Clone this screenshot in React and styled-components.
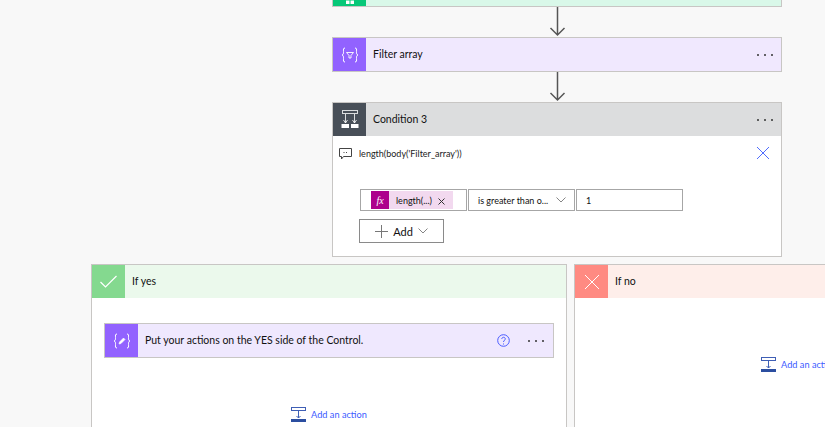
import React from "react";
import styled, { createGlobalStyle } from "styled-components";

const GlobalStyle = createGlobalStyle`
  html, body {
    margin: 0;
    padding: 0;
    background: #f8f8f8;
    font-family: Lato, "Open Sans", sans-serif;
    color: #111;
  }
`;

const Designer = styled.div`
  width: 825px;
  height: 427px;
  overflow: hidden;
  background: #f8f8f8;
`;

const Flow = styled.div`
  width: 450px;
  margin-left: 332px;
  margin-top: -28px;
  display: flex;
  flex-direction: column;
`;

const Connector = styled.svg`
  display: block;
  width: 20px;
  height: 30px;
  align-self: center;
`;

const Card = styled.div`
  box-sizing: border-box;
  width: ${(p) => p.$width || "450px"};
  flex: none;
  border: 1px solid #c8c6c4;
  background: #fff;
`;

const Header = styled.div`
  display: flex;
  align-items: center;
  height: 33px;
  background: ${(p) => p.$tint};
`;

const IconBox = styled.div`
  width: 33px;
  height: 33px;
  flex: none;
  display: flex;
  align-items: center;
  justify-content: center;
  background: ${(p) => p.$accent};
`;

const Title = styled.div`
  flex: 1;
  margin-left: 7px;
  margin-bottom: 1px;
  font-size: 10.5px;
  white-space: nowrap;
`;

const Dots = styled.div`
  display: flex;
  gap: 5px;
  margin-right: ${(p) => p.$right || "8px"};
  span {
    width: 2px;
    height: 2px;
    border-radius: 50%;
    background: #333;
  }
`;

const Help = styled.svg`
  width: 13px;
  height: 13px;
  margin-right: 18px;
  flex: none;
`;

const ConditionBody = styled.div`
  height: 120px;
  padding-top: 11px;
  box-sizing: border-box;
`;

const Expression = styled.div`
  display: flex;
  align-items: center;
  height: 12px;
  padding: 0 12px 0 6px;
  font-size: 9px;
  svg {
    flex: none;
  }
`;

const ExpressionText = styled.div`
  flex: 1;
  margin-left: 7px;
  color: #222;
`;

const Criteria = styled.div`
  display: flex;
  gap: 1px;
  margin: 30px 0 0 27px;
`;

const Field = styled.div`
  box-sizing: border-box;
  width: ${(p) => p.$width};
  height: 22px;
  display: flex;
  align-items: center;
  border: 1px solid #a6a6a6;
  font-size: 9px;
  padding-left: ${(p) => p.$pad || "0"};
`;

const Token = styled.div`
  display: flex;
  align-items: center;
  height: 18px;
  margin-left: 10px;
  width: 82px;
  background: #f2d9ef;
`;

const TokenIcon = styled.div`
  width: 18px;
  height: 18px;
  background: #ad008c;
  color: #fff;
  font-family: "Liberation Serif", serif;
  font-style: italic;
  font-size: 10px;
  display: flex;
  align-items: center;
  justify-content: center;
`;

const TokenLabel = styled.span`
  margin-left: 7px;
  flex: 1;
`;

const TokenRemove = styled.svg`
  width: 7px;
  height: 7px;
  margin-right: 8px;
  margin-top: 2px;
`;

const SelectLabel = styled.span`
  flex: 1;
  white-space: nowrap;
`;

const AddButton = styled.div`
  box-sizing: border-box;
  width: 85px;
  height: 24px;
  margin: 8px 0 0 26px;
  display: flex;
  align-items: center;
  justify-content: center;
  gap: 5px;
  border: 1px solid #8a8a8a;
  background: #fff;
  font-size: 11px;
`;

const Branches = styled.div`
  display: flex;
  gap: 7px;
  margin: 7px 0 0 91px;
  width: 1000px;
`;

const BranchBody = styled.div`
  padding: ${(p) => p.$pad};
`;

const AddAction = styled.div`
  display: flex;
  align-items: center;
  justify-content: center;
  gap: 5px;
  height: 15px;
  margin-top: ${(p) => p.$top};
  color: #3b5bff;
  font-size: 9.2px;
`;

const ActionLabel = styled.span`
  margin-bottom: 1px;
`;

const Chevron = ({ right = 0 }) => (
  <svg width="10" height="6" viewBox="0 0 10 6" style={{ marginRight: right }}>
    <path d="M.5.500l4.500 4.500 4.500-4.500" fill="none" stroke="#666" strokeWidth="0.8" />
  </svg>
);

const Arrow = () => (
  <Connector viewBox="0 0 20 30">
    <path d="M10.5 0v28M3.5 21l7 7 7-7" fill="none" stroke="#555" strokeWidth="1.5" />
  </Connector>
);

const Braces = ({ children }) => (
  <svg width="18" height="16" viewBox="0 0 18 16" fill="none" stroke="#fff" strokeWidth="1">
    <path d="M4 1C2 1 2.500 2.500 2.500 4.500S2.500 7.500 1 8c1.500.5 1.500 1.500 1.500 3.500S2 15 4 15" />
    <path d="M14 1c2 0 1.500 1.500 1.500 3.500S15.500 7.500 17 8c-1.500.5-1.500 1.500-1.500 3.500S16 15 14 15" />
    {children}
  </svg>
);

const MoreDots = ({ right }) => (
  <Dots $right={right}>
    <span />
    <span />
    <span />
  </Dots>
);

const ActionIcon = () => (
  <svg width="15" height="15" viewBox="0 0 15 15" fill="none">
    <rect x="0.500" y="0.500" width="14" height="3" stroke="#3f5fb5" />
    <path d="M7.500 4v7M5.500 9l2 2 2-2" stroke="#3f5fb5" />
    <rect x="0" y="12" width="15" height="3" fill="#2b4ea0" />
  </svg>
);

const ConditionIcon = () => (
  <svg width="18" height="19" viewBox="0 0 18 19" fill="none" stroke="#fff">
    <rect x="1.500" y="0.500" width="15" height="3" strokeOpacity="0.8" />
    <path d="M4.500 4v9M13.500 4v9M2.500 10l2 3 2-3M11.500 10l2 3 2-3" strokeOpacity="0.8" />
    <rect x="0.500" y="14" width="7.500" height="4" fill="#fff" stroke="none" />
    <rect x="10" y="14" width="7.500" height="4" fill="#fff" stroke="none" />
  </svg>
);

const ActionLink = ({ top }) => (
  <AddAction $top={top}>
    <ActionIcon />
    <ActionLabel>Add an action</ActionLabel>
  </AddAction>
);

export default function App() {
  return (
    <Designer>
      <GlobalStyle />
      <Flow>
        <Card>
          <Header $tint="#d9f8e9">
            <IconBox $accent="#07c878">
              <svg width="8" height="28" viewBox="0 0 8 28" fill="#fff">
                <rect x="0" y="24.500" width="3.500" height="3.500" />
                <rect x="4.500" y="24.500" width="3.500" height="3.500" />
              </svg>
            </IconBox>
          </Header>
        </Card>
        <Arrow />
        <Card>
          <Header $tint="#f0e8fe">
            <IconBox $accent="#9262ff">
              <Braces>
                <path d="M5.500 5.500h7L10 8.500V11H8V8.500z" strokeWidth="0.900" />
              </Braces>
            </IconBox>
            <Title>Filter array</Title>
            <MoreDots />
          </Header>
        </Card>
        <Arrow />
        <Card>
          <Header $tint="#dcddde">
            <IconBox $accent="#484f58">
              <ConditionIcon />
            </IconBox>
            <Title>Condition 3</Title>
            <MoreDots />
          </Header>
          <ConditionBody>
            <Expression>
              <svg width="13" height="13" viewBox="0 0 13 13" fill="none" stroke="#444">
                <path d="M.5 1.500h12v8H4.500L2.500 12V9.500h-2z" />
                <path d="M4.500 5.500h1M7 5.500h1" />
              </svg>
              <ExpressionText>length(body('Filter_array'))</ExpressionText>
              <svg width="12" height="12" viewBox="0 0 12 12" stroke="#3b5bff" strokeWidth="0.900">
                <path d="M0 0l12 12M12 0L0 12" />
              </svg>
            </Expression>
            <Criteria>
              <Field $width="107px">
                <Token>
                  <TokenIcon>fx</TokenIcon>
                  <TokenLabel>length(...)</TokenLabel>
                  <TokenRemove viewBox="0 0 7 7" stroke="#333" strokeWidth="1">
                    <path d="M.5.500l6 6M6.500.500l-6 6" />
                  </TokenRemove>
                </Token>
              </Field>
              <Field $width="107px" $pad="9px">
                <SelectLabel>is greater than o...</SelectLabel>
                <Chevron right={8} />
              </Field>
              <Field $width="107px" $pad="9px">
                1
              </Field>
            </Criteria>
            <AddButton>
              <svg width="13" height="13" viewBox="0 0 13 13" stroke="#777">
                <path d="M6.500 0v13M0 6.500h13" />
              </svg>
              Add
              <Chevron />
            </AddButton>
          </ConditionBody>
        </Card>
      </Flow>
      <Branches>
        <Card $width="476px">
          <Header $tint="#ebf9ec">
            <IconBox $accent="#84d98f">
              <svg width="17" height="13" viewBox="0 0 17 13" fill="none" stroke="#fff" strokeWidth="1.200">
                <path d="M.5 7l5 5L16.500 1" />
              </svg>
            </IconBox>
            <Title>If yes</Title>
          </Header>
          <BranchBody $pad="25px 12px 20px">
            <Card>
              <Header $tint="#efe8fe">
                <IconBox $accent="#9262ff">
                  <Braces>
                    <path d="M6 11l.500-2 4-4 1.500 1.500-4 4z" fill="#fff" strokeWidth="0.600" />
                  </Braces>
                </IconBox>
                <Title>Put your actions on the YES side of the Control.</Title>
                <Help viewBox="0 0 13 13" fill="none" stroke="#4a5cff">
                  <circle cx="6.500" cy="6.500" r="5.800" />
                  <path d="M4.800 5c0-2.300 3.500-2.300 3.500 0 0 1.300-1.800 1.300-1.800 3M6.500 9.500v1" />
                </Help>
                <MoreDots right="9px" />
              </Header>
            </Card>
            <ActionLink top="49px" />
          </BranchBody>
        </Card>
        <Card $width="450px">
          <Header $tint="#feeeea">
            <IconBox $accent="#ff8a82">
              <svg width="14" height="14" viewBox="0 0 14 14" stroke="#fff" strokeWidth="1">
                <path d="M0 0l14 14M14 0L0 14" />
              </svg>
            </IconBox>
            <Title>If no</Title>
          </Header>
          <BranchBody $pad="59px 0 22px">
            <ActionLink top="0" />
          </BranchBody>
        </Card>
      </Branches>
    </Designer>
  );
}
